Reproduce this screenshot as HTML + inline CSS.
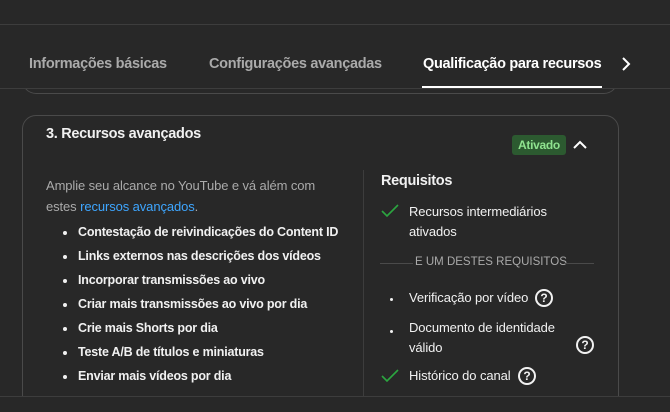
<!DOCTYPE html>
<html><head><meta charset="utf-8"><style>
*{margin:0;padding:0;box-sizing:border-box}
html,body{width:670px;height:412px;overflow:hidden}
body{background:#282828;font-family:"Liberation Sans",sans-serif;color:#f1f1f1;position:relative}
.a{position:absolute;white-space:nowrap}
.tab{top:56px;font-size:14.5px;font-weight:bold;color:#aaa;letter-spacing:-0.3px}
.li{font-size:12.5px;font-weight:bold;letter-spacing:-0.2px;color:#f1f1f1}
.dot{width:4px;height:4px;border-radius:50%;background:#f1f1f1}
.q{width:18px;height:18px;border:2px solid #f1f1f1;border-radius:50%;font-size:12px;font-weight:bold;text-align:center;line-height:14px}
</style></head><body>
<div class="a" style="left:0;top:24px;width:670px;height:1px;background:#3d3d3d"></div>
<div class="a" style="left:22px;top:70px;width:596px;height:24px;border:1px solid #4a4a4a;border-top:none;border-radius:0 0 14px 14px"></div>
<div class="a" style="left:0;top:64px;width:670px;height:24px;background:#282828"></div>
<div class="a" style="left:0;top:88px;width:670px;height:1px;background:#3d3d3d"></div>
<div class="a tab" style="left:29px">Informações básicas</div>
<div class="a tab" style="left:209px">Configurações avançadas</div>
<div class="a tab" style="left:423px;color:#fff">Qualificação para recursos</div>
<div class="a" style="left:422px;top:86px;width:180px;height:2px;background:#fff"></div>
<svg class="a" style="left:618px;top:55px" width="16" height="18" viewBox="0 0 16 18"><path d="M5 3l6 6-6 6" stroke="#fff" stroke-width="2" fill="none"/></svg>

<div class="a" style="left:22px;top:115px;width:597px;height:300px;border:1px solid #4a4a4a;border-radius:14px"></div>
<div class="a" style="left:0;top:396px;width:670px;height:1px;background:#3d3d3d"></div>
<div class="a" style="left:0;top:397px;width:670px;height:15px;background:#282828"></div>
<div class="a" style="left:46px;top:126px;font-size:14.5px;font-weight:bold;letter-spacing:-0.3px">3. Recursos avançados</div>
<div class="a" style="left:512px;top:135px;width:54px;height:20px;background:#2c5a30;border-radius:3px;color:#8fe38f;font-size:12px;font-weight:bold;text-align:center;line-height:20px;letter-spacing:-0.3px">Ativado</div>
<svg class="a" style="left:572px;top:137px" width="16" height="14" viewBox="0 0 16 14"><path d="M2 11l6-6 6 6" stroke="#fff" stroke-width="2" fill="none"/></svg>

<div class="a" style="left:46px;top:175px;font-size:13px;color:#aaa;line-height:21px;letter-spacing:-0.1px">Amplie seu alcance no YouTube e vá além com<br>estes <span style="color:#3ea6ff">recursos avançados</span>.</div>
<div class="a" style="left:363px;top:170px;width:1px;height:226px;background:#3d3d3d"></div>

<div class="a dot" style="left:63px;top:231px"></div><div class="a li" style="left:78px;top:225px">Contestação de reivindicações do Content ID</div>
<div class="a dot" style="left:63px;top:255px"></div><div class="a li" style="left:78px;top:249px">Links externos nas descrições dos vídeos</div>
<div class="a dot" style="left:63px;top:279px"></div><div class="a li" style="left:78px;top:273px">Incorporar transmissões ao vivo</div>
<div class="a dot" style="left:63px;top:303px"></div><div class="a li" style="left:78px;top:297px">Criar mais transmissões ao vivo por dia</div>
<div class="a dot" style="left:63px;top:327px"></div><div class="a li" style="left:78px;top:321px">Crie mais Shorts por dia</div>
<div class="a dot" style="left:63px;top:351px"></div><div class="a li" style="left:78px;top:345px">Teste A/B de títulos e miniaturas</div>
<div class="a dot" style="left:63px;top:375px"></div><div class="a li" style="left:78px;top:369px">Enviar mais vídeos por dia</div>

<div class="a" style="left:381px;top:173px;font-size:14.5px;font-weight:bold;letter-spacing:-0.3px">Requisitos</div>
<svg class="a" style="left:381px;top:204px" width="18" height="14" viewBox="0 0 18 14"><path d="M1 7l5 5L17 1" stroke="#2ba640" stroke-width="1.6" fill="none"/></svg>
<div class="a" style="left:409px;top:202px;font-size:13px;line-height:20px;letter-spacing:-0.1px">Recursos intermediários<br>ativados</div>
<div class="a" style="left:380px;top:263px;width:33px;height:1px;background:#4a4a4a"></div>
<div class="a" style="left:415px;top:256px;font-size:11.5px;color:#aaa;letter-spacing:0px">E UM DESTES REQUISITOS</div>
<div class="a" style="left:564px;top:263px;width:30px;height:1px;background:#4a4a4a"></div>
<div class="a dot" style="left:390px;top:298px;width:3px;height:3px"></div>
<div class="a" style="left:409px;top:290px;font-size:13px;letter-spacing:-0.1px">Verificação por vídeo</div>
<div class="a q" style="left:535px;top:289px">?</div>
<div class="a dot" style="left:390px;top:330px;width:3px;height:3px"></div>
<div class="a" style="left:409px;top:318px;font-size:13px;line-height:20px;letter-spacing:-0.1px">Documento de identidade<br>válido</div>
<div class="a q" style="left:576px;top:336px">?</div>
<svg class="a" style="left:381px;top:369px" width="18" height="14" viewBox="0 0 18 14"><path d="M1 7l5 5L17 1" stroke="#2ba640" stroke-width="1.6" fill="none"/></svg>
<div class="a" style="left:409px;top:368px;font-size:13px;letter-spacing:-0.1px">Histórico do canal</div>
<div class="a q" style="left:518px;top:367px">?</div>
</body></html>
